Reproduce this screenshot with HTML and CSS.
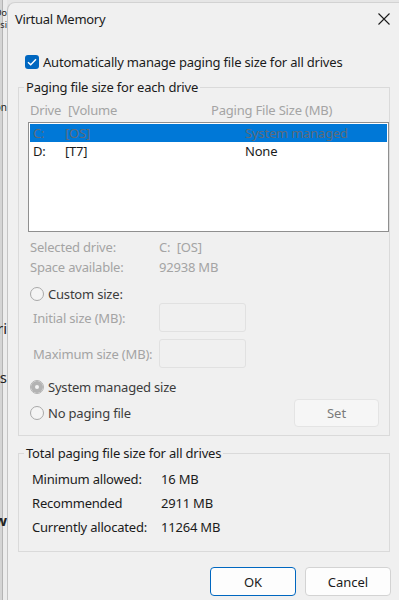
FILE: index.html
```html
<!doctype html>
<html lang="en">
    <head>
        <meta charset="UTF-8" />
        <meta name="viewport" content="width=device-width, initial-scale=1.0" />
        <title>Virtual Memory</title>
        <link rel="stylesheet" href="styles.css">
    </head>
    <body>
        <div class="desktop">
            <!-- edge of the window that sits behind the dialog -->
            <div class="behind">
                <span class="frag frag-1">Do</span>
                <span class="frag frag-2">Usi</span>
                <span class="frag frag-3">on</span>
                <span class="frag frag-4">Pri</span>
                <span class="frag frag-5">os</span>
                <span class="frag frag-6">w</span>
            </div>

            <div class="dialog">
                <div class="titlebar">
                    <span class="title">Virtual Memory</span>
                    <button class="close" aria-label="Close">
                        <svg width="12" height="12" viewBox="0 0 12 12">
                            <path d="M0.5 0.5 L11.5 11.5 M11.5 0.5 L0.5 11.5" stroke="#1b1b1b" stroke-width="1.1" fill="none" />
                        </svg>
                    </button>
                </div>

                <div class="content">
                    <label class="check-row">
                        <span class="checkbox">
                            <svg width="10" height="8" viewBox="0 0 10 8">
                                <path d="M1 4.2 L3.7 6.8 L9 1.2" stroke="#ffffff" stroke-width="1.4" fill="none" />
                            </svg>
                        </span>
                        Automatically manage paging file size for all drives
                    </label>

                    <fieldset class="group">
                        <legend>Paging file size for each drive</legend>
                        <div class="group-body drives">
                            <div class="list-head">
                                <span>Drive</span>
                                <span>[Volume</span>
                                <span>Paging File Size (MB)</span>
                            </div>
                            <div class="drive-list">
                                <div class="drive-row selected">
                                    <span>C:</span>
                                    <span>[OS]</span>
                                    <span>System managed</span>
                                </div>
                                <div class="drive-row">
                                    <span>D:</span>
                                    <span>[T7]</span>
                                    <span>None</span>
                                </div>
                            </div>

                            <div class="info">
                                <span>Selected drive:</span>
                                <span>C:&nbsp;&nbsp;[OS]</span>
                                <span>Space available:</span>
                                <span>92938 MB</span>
                            </div>

                            <div class="radio custom-radio">
                                <span class="radio-dot"></span>
                                Custom size:
                            </div>

                            <div class="size-fields">
                                <span class="size-label">Initial size (MB):</span>
                                <span class="size-input"></span>
                                <span class="size-label">Maximum size (MB):</span>
                                <span class="size-input"></span>
                            </div>

                            <div class="radio system-radio">
                                <span class="radio-dot on"></span>
                                System managed size
                            </div>

                            <div class="nopaging-row">
                                <div class="radio">
                                    <span class="radio-dot"></span>
                                    No paging file
                                </div>
                                <button class="set-btn">Set</button>
                            </div>
                        </div>
                    </fieldset>

                    <fieldset class="group totals-group">
                        <legend>Total paging file size for all drives</legend>
                        <div class="group-body totals">
                            <span>Minimum allowed:</span>
                            <span>16 MB</span>
                            <span>Recommended</span>
                            <span>2911 MB</span>
                            <span>Currently allocated:</span>
                            <span>11264 MB</span>
                        </div>
                    </fieldset>

                    <div class="actions">
                        <button class="btn btn-default">OK</button>
                        <button class="btn">Cancel</button>
                    </div>
                </div>
            </div>
        </div>
    </body>
</html>
```

FILE: styles.css
```css
:root {
    --dialog-bg: #f0f0f0;
    --text-color: #1b1b1b;
    --radio-text: #3c3c3c;
    --disabled-color: #a4a4a4;
    --accent: #0067c0;
    --select-color: #0078d7;
    --group-border: #dadada;
    --ui-font: "Noto Sans", "Open Sans", sans-serif;
}

* {
    box-sizing: border-box;
}

body {
    margin: 0;
    font-family: var(--ui-font);
    font-size: 13px;
    letter-spacing: -0.2px;
    color: var(--text-color);
    background: #e6e6e6;
}

.desktop {
    display: flex;
    height: 600px;
    overflow: hidden;
}

/* window behind the dialog */
.behind {
    width: 7px;
    flex: none;
    display: flex;
    flex-direction: column;
    background: linear-gradient(to right, #d4d4d4 0 2px, #b4b4b4 2px 3px, #ececec 3px);
    color: #222;
    letter-spacing: 0;
}

.frag {
    display: flex;
    justify-content: flex-end;
    overflow: hidden;
    height: 12px;
    line-height: 12px;
    font-size: 13px;
    white-space: nowrap;
}

.frag-1 { margin-top: 7px; font-size: 9px; }
.frag-2 { margin-top: 0; font-size: 9px; }
.frag-3 { margin-top: 70px; font-size: 10px; }
.frag-4 { margin-top: 209px; font-size: 15px; }
.frag-5 { margin-top: 37px; font-size: 15px; }
.frag-6 { margin-top: 131px; font-size: 15px; font-weight: 700; }

.dialog {
    flex: 1;
    margin-top: 2px;
    background: var(--dialog-bg);
    border-top: 1px solid #d2d2d2;
    border-left: 1px solid #c4c4c4;
    border-top-left-radius: 8px;
    display: flex;
    flex-direction: column;
}

.titlebar {
    height: 31px;
    display: flex;
    align-items: center;
    justify-content: space-between;
    padding: 0 9px 0 7px;
}

.title {
    font-size: 13px;
    letter-spacing: -0.3px;
}

.close {
    border: none;
    background: none;
    padding: 0;
    width: 12px;
    height: 12px;
    display: flex;
}

.content {
    padding: 0 9px 0 10px;
    display: flex;
    flex-direction: column;
}

.check-row {
    display: flex;
    align-items: center;
    gap: 4px;
    height: 20px;
    margin-top: 18px;
    padding-left: 7px;
}

.checkbox {
    width: 14px;
    height: 14px;
    border-radius: 3px;
    background: var(--accent);
    display: flex;
    align-items: center;
    justify-content: center;
}

.group {
    margin: 6px 0 0;
    padding: 0;
    border: 1px solid var(--group-border);
    min-width: 0;
}

.group legend {
    margin-left: 5px;
    padding: 0 2px;
    line-height: 18px;
}

.group-body {
    padding: 5px 0 8px 9px;
}

.list-head {
    display: grid;
    grid-template-columns: 38px 143px 1fr;
    line-height: 18px;
    padding-left: 2px;
    color: var(--disabled-color);
}

.drive-list {
    margin-top: 3px;
    height: 110px;
    border: 1px solid #8f8f8f;
    background: #ffffff;
    padding: 1px;
}

.drive-row {
    display: grid;
    grid-template-columns: 32px 180px 1fr;
    height: 18px;
    line-height: 18px;
    padding-left: 3px;
}

.drive-row.selected {
    background: var(--select-color);
    color: #5f6b78;
}

.info {
    margin-top: 5px;
    display: grid;
    grid-template-columns: 129px 1fr;
    line-height: 20px;
    padding-left: 2px;
    color: var(--disabled-color);
}

.radio {
    display: flex;
    align-items: center;
    gap: 4px;
    color: var(--radio-text);
    padding-left: 2px;
}

.radio-dot {
    width: 14px;
    height: 14px;
    border-radius: 50%;
    border: 1px solid #a9a9a9;
    background: #f4f4f4;
}

.radio-dot.on {
    border-color: #b3b3b3;
    box-shadow: inset 0 0 0 4px #b3b3b3;
}

.custom-radio {
    margin-top: 8px;
    line-height: 18px;
}

.size-fields {
    display: grid;
    grid-template-columns: 126px 87px;
    grid-auto-rows: 29px;
    row-gap: 7px;
    align-items: center;
    padding-left: 5px;
    color: var(--disabled-color);
}

.size-input {
    height: 29px;
    border: 1px solid #e1e1e1;
    border-radius: 3px;
}

.system-radio {
    margin-top: 9px;
    line-height: 20px;
}

.nopaging-row {
    margin-top: 2px;
    display: flex;
    align-items: center;
    justify-content: space-between;
    padding-right: 10px;
}

.set-btn {
    width: 85px;
    height: 28px;
    font: inherit;
    color: #7a7a7a;
    background: #f6f6f6;
    border: 1px solid #e4e4e4;
    border-radius: 4px;
}

.totals-group {
    margin-top: 8px;
}

.totals {
    display: grid;
    grid-template-columns: 129px 1fr;
    line-height: 24px;
    padding: 5px 0 12px 13px;
}

.actions {
    margin-top: 15px;
    margin-right: -1px;
    display: flex;
    justify-content: flex-end;
    gap: 9px;
}

.btn {
    width: 86px;
    height: 29px;
    font: inherit;
    color: var(--text-color);
    background: #fdfdfd;
    border: 1px solid #d3d3d3;
    border-radius: 4px;
}

.btn-default {
    border: 1.5px solid var(--accent);
}
```
